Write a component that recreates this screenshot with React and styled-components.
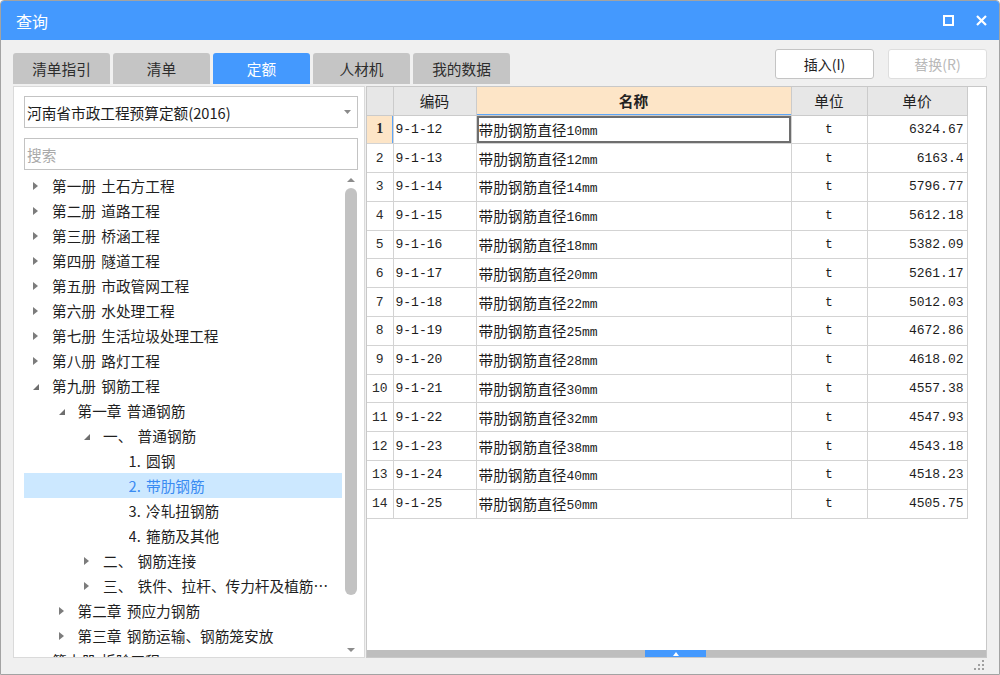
import styled, { createGlobalStyle } from "styled-components";

const CN = `"Noto Sans CJK SC", "Noto Sans", sans-serif`;
const MONO = `"Liberation Mono", "Noto Sans CJK SC", monospace`;

const GlobalStyle = createGlobalStyle`
  html, body {
    margin: 0;
    padding: 0;
    background: #fff;
  }
  body {
    font-family: ${CN};
  }
  * {
    box-sizing: border-box;
  }
`;

const Window = styled.div`
  width: 1000px;
  height: 675px;
  display: flex;
  flex-direction: column;
  background: #f0f0f0;
  border: 1px solid #a3a3a3;
  border-radius: 4px 4px 0 0;
  overflow: hidden;
  font-family: ${CN};
`;

const TitleBar = styled.div`
  height: 39px;
  flex: none;
  display: flex;
  align-items: center;
  padding: 0 7px 0 15px;
  background: #4499fe;
  color: #fff;
  font-size: 16px;
`;

const TitleText = styled.div`
  flex: 1;
`;

const TitleButton = styled.div`
  width: 22px;
  height: 22px;
  margin-left: 11px;
  display: flex;
  align-items: center;
  justify-content: center;
`;

const Body = styled.div`
  flex: 1;
  min-height: 0;
  display: flex;
  flex-direction: column;
  padding: 9px 12px 0 12px;
`;

const TopBar = styled.div`
  height: 37px;
  flex: none;
  display: flex;
  justify-content: space-between;
`;

const Tabs = styled.div`
  display: flex;
  gap: 3px;
  align-self: flex-end;
  margin-bottom: 2px;
`;

const Tab = styled.div`
  width: 97px;
  height: 31px;
  display: flex;
  align-items: center;
  justify-content: center;
  border-radius: 3px 3px 0 0;
  font-size: 14.67px;
  background: ${(p) => (p.$active ? "#4499fe" : "#c5c5c5")};
  color: ${(p) => (p.$active ? "#fff" : "#2d2d2d")};
`;

const Actions = styled.div`
  display: flex;
  gap: 14px;
`;

const ActionButton = styled.button`
  width: 99px;
  height: 30px;
  padding: 0;
  background: #fff;
  border: 1px solid ${(p) => (p.disabled ? "#dedede" : "#c4c4c4")};
  border-radius: 3px;
  font-family: ${CN};
  font-size: 14px;
  color: ${(p) => (p.disabled ? "#b8b8b8" : "#222")};
`;

const Panels = styled.div`
  height: 572px;
  flex: none;
  display: flex;
`;

const LeftPanel = styled.div`
  width: 352px;
  flex: none;
  display: flex;
  flex-direction: column;
  background: #fff;
  border: 1px solid #dadada;
  padding: 9px 6px 0 10px;
`;

const Select = styled.div`
  height: 32px;
  flex: none;
  display: flex;
  align-items: center;
  justify-content: space-between;
  padding: 0 6px 0 2px;
  border: 1px solid #c3c3c3;
  font-size: 14.67px;
  color: #1c1c1c;
`;

const SearchInput = styled.input`
  height: 32px;
  flex: none;
  margin-top: 10px;
  padding: 0 2px;
  border: 1px solid #c3c3c3;
  outline: none;
  font-family: ${CN};
  font-size: 14.67px;
  color: #1c1c1c;

  &::placeholder {
    color: #a9a9a9;
  }
`;

const TreeArea = styled.div`
  flex: 1;
  min-height: 0;
  margin-top: 3px;
  display: flex;
  overflow: hidden;
`;

const TreeList = styled.div`
  flex: 1;
  min-width: 0;
`;

const TreeRow = styled.div`
  height: 25px;
  display: flex;
  align-items: center;
  padding-left: ${(p) => 9 + p.$level * 25.5}px;
  padding-right: 8px;
  background: ${(p) => (p.$selected ? "#cce8ff" : "transparent")};
  color: ${(p) => (p.$selected ? "#3a8bf2" : "#1f1f1f")};
`;

const Toggle = styled.div`
  width: 19px;
  flex: none;
  display: flex;
  align-items: center;
`;

const TreeLabel = styled.div`
  flex: 1;
  min-width: 0;
  font-size: 14.67px;
  line-height: 25px;
  white-space: pre;
  word-spacing: 2px;
  overflow: hidden;
  text-overflow: ellipsis;
`;

const VScroll = styled.div`
  width: 14px;
  flex: none;
  margin-left: 2px;
  display: flex;
  flex-direction: column;
  align-items: center;
`;

const ScrollArrow = styled.div`
  height: 14px;
  flex: none;
  display: flex;
  align-items: center;
  justify-content: center;
`;

const VThumb = styled.div`
  width: 12px;
  height: 407px;
  flex: none;
  margin-top: 1px;
  border-radius: 6px;
  background: #c2c2c2;
`;

const Spacer = styled.div`
  flex: 1;
`;

const RightPanel = styled.div`
  flex: 1;
  margin-left: 1px;
  display: flex;
  flex-direction: column;
  background: #fff;
  border: 1px solid #c8c8c8;
`;

const TableArea = styled.div`
  flex: 1;
  min-height: 0;
  overflow: hidden;
`;

const Table = styled.table`
  width: 600px;
  border-collapse: collapse;
  table-layout: fixed;
`;

const HeadCell = styled.th`
  height: 28px;
  padding: 0;
  border: 1px solid #cbcbcb;
  border-top: none;
  background: ${(p) => (p.$current ? "#fde5c7" : "#e7e7e7")};
  box-shadow: ${(p) => (p.$current ? "inset 0 -1px 0 #5ea6f7" : "none")};
  font-family: ${CN};
  font-size: 14.67px;
  font-weight: ${(p) => (p.$current ? 700 : 400)};
  color: #222;
  text-align: center;

  &:first-child {
    border-left: none;
  }
`;

const Row = styled.tr`
  height: 28.8px;
`;

const Cell = styled.td`
  padding: 0 ${(p) => (p.$align === "right" ? "3px" : "0")} 0
    ${(p) => (p.$align === "left" ? "2px" : "0")};
  border: 1px solid #d3d3d3;
  font-family: ${MONO};
  font-size: 13px;
  color: #1c1c1c;
  text-align: ${(p) => p.$align || "center"};
  white-space: nowrap;
  overflow: hidden;
  box-shadow: ${(p) => (p.$active ? "inset 0 0 0 2px #6e6e6e" : "none")};
`;

const NumCell = styled.td`
  padding: 0;
  border: 1px solid #d3d3d3;
  border-left: none;
  background: ${(p) => (p.$current ? "#fde5c7" : "#fff")};
  box-shadow: ${(p) => (p.$current ? "inset -1px 0 0 #5ea6f7" : "none")};
  font-family: ${(p) => (p.$current ? `"Liberation Serif", serif` : MONO)};
  font-size: ${(p) => (p.$current ? "14px" : "13px")};
  font-weight: ${(p) => (p.$current ? 700 : 400)};
  color: #2a2a2a;
  text-align: center;
`;

const CnText = styled.span`
  font-family: ${CN};
  font-size: 14.67px;
`;

const SizeText = styled.span`
  position: relative;
  top: -1px;
`;

const HScroll = styled.div`
  height: 7px;
  flex: none;
  background: #bebebe;
  padding-left: 278px;
`;

const HThumb = styled.div`
  width: 61px;
  height: 7px;
  background: #4499fe;
  display: flex;
  align-items: center;
  justify-content: center;
`;

const Footer = styled.div`
  height: 15px;
  flex: none;
  display: flex;
  justify-content: flex-end;
  align-items: flex-start;
  padding: 2px 3px 0 0;
`;

const tree = [
  { level: 0, label: "第一册 土石方工程", toggle: "closed" },
  { level: 0, label: "第二册 道路工程", toggle: "closed" },
  { level: 0, label: "第三册 桥涵工程", toggle: "closed" },
  { level: 0, label: "第四册 隧道工程", toggle: "closed" },
  { level: 0, label: "第五册 市政管网工程", toggle: "closed" },
  { level: 0, label: "第六册 水处理工程", toggle: "closed" },
  { level: 0, label: "第七册 生活垃圾处理工程", toggle: "closed" },
  { level: 0, label: "第八册 路灯工程", toggle: "closed" },
  { level: 0, label: "第九册 钢筋工程", toggle: "open" },
  { level: 1, label: "第一章 普通钢筋", toggle: "open" },
  { level: 2, label: "一、 普通钢筋", toggle: "open" },
  { level: 3, label: "1. 圆钢" },
  { level: 3, label: "2. 带肋钢筋", selected: true },
  { level: 3, label: "3. 冷轧扭钢筋" },
  { level: 3, label: "4. 箍筋及其他" },
  { level: 2, label: "二、 钢筋连接", toggle: "closed" },
  { level: 2, label: "三、 铁件、拉杆、传力杆及植筋、锚栓", toggle: "closed" },
  { level: 1, label: "第二章 预应力钢筋", toggle: "closed" },
  { level: 1, label: "第三章 钢筋运输、钢筋笼安放", toggle: "closed" },
  { level: 0, label: "第十册 拆除工程", toggle: "closed" },
];

const items = [
  ["9-1-12", "10mm", "6324.67"],
  ["9-1-13", "12mm", "6163.4"],
  ["9-1-14", "14mm", "5796.77"],
  ["9-1-15", "16mm", "5612.18"],
  ["9-1-16", "18mm", "5382.09"],
  ["9-1-17", "20mm", "5261.17"],
  ["9-1-18", "22mm", "5012.03"],
  ["9-1-19", "25mm", "4672.86"],
  ["9-1-20", "28mm", "4618.02"],
  ["9-1-21", "30mm", "4557.38"],
  ["9-1-22", "32mm", "4547.93"],
  ["9-1-23", "38mm", "4543.18"],
  ["9-1-24", "40mm", "4518.23"],
  ["9-1-25", "50mm", "4505.75"],
];

function Caret({ state }) {
  if (state === "open") {
    return (
      <svg width="6" height="6" viewBox="0 0 6 6" style={{ marginTop: 3 }}>
        <path d="M6 0 L6 6 L0 6 Z" fill="#6e6e6e" />
      </svg>
    );
  }
  if (state === "closed") {
    return (
      <svg width="5" height="8" viewBox="0 0 5 8">
        <path d="M0 0 L5 4 L0 8 Z" fill="#7c7c7c" />
      </svg>
    );
  }
  return null;
}

export default function App() {
  return (
    <>
      <GlobalStyle />
      <Window>
        <TitleBar>
          <TitleText>查询</TitleText>
          <TitleButton>
            <svg width="11" height="11" viewBox="0 0 11 11">
              <rect x="1" y="1" width="9" height="9" fill="none" stroke="#fff" strokeWidth="2" />
            </svg>
          </TitleButton>
          <TitleButton>
            <svg width="11" height="11" viewBox="0 0 11 11">
              <path d="M1 1 L10 10 M10 1 L1 10" stroke="#fff" strokeWidth="2.2" />
            </svg>
          </TitleButton>
        </TitleBar>

        <Body>
          <TopBar>
            <Tabs>
              <Tab>清单指引</Tab>
              <Tab>清单</Tab>
              <Tab $active>定额</Tab>
              <Tab>人材机</Tab>
              <Tab>我的数据</Tab>
            </Tabs>
            <Actions>
              <ActionButton>插入(I)</ActionButton>
              <ActionButton disabled>替换(R)</ActionButton>
            </Actions>
          </TopBar>

          <Panels>
            <LeftPanel>
              <Select>
                <span>河南省市政工程预算定额(2016)</span>
                <svg width="7" height="4" viewBox="0 0 7 4">
                  <path d="M0 0 L7 0 L3.5 4 Z" fill="#8a8a8a" />
                </svg>
              </Select>
              <SearchInput placeholder="搜索" />
              <TreeArea>
                <TreeList>
                  {tree.map((node) => (
                    <TreeRow key={node.label} $level={node.level} $selected={node.selected}>
                      <Toggle>
                        <Caret state={node.toggle} />
                      </Toggle>
                      <TreeLabel>{node.label}</TreeLabel>
                    </TreeRow>
                  ))}
                </TreeList>
                <VScroll>
                  <ScrollArrow>
                    <svg width="8" height="4" viewBox="0 0 8 4">
                      <path d="M0 4 L8 4 L4 0 Z" fill="#8c8c8c" />
                    </svg>
                  </ScrollArrow>
                  <VThumb />
                  <Spacer />
                  <ScrollArrow>
                    <svg width="8" height="4" viewBox="0 0 8 4">
                      <path d="M0 0 L8 0 L4 4 Z" fill="#8c8c8c" />
                    </svg>
                  </ScrollArrow>
                </VScroll>
              </TreeArea>
            </LeftPanel>

            <RightPanel>
              <TableArea>
                <Table>
                  <colgroup>
                    <col style={{ width: 26 }} />
                    <col style={{ width: 83 }} />
                    <col style={{ width: 315 }} />
                    <col style={{ width: 76 }} />
                    <col style={{ width: 100 }} />
                  </colgroup>
                  <thead>
                    <tr>
                      <HeadCell />
                      <HeadCell>编码</HeadCell>
                      <HeadCell $current>名称</HeadCell>
                      <HeadCell>单位</HeadCell>
                      <HeadCell>单价</HeadCell>
                    </tr>
                  </thead>
                  <tbody>
                    {items.map(([code, size, price], i) => (
                      <Row key={code}>
                        <NumCell $current={i === 0}>{i + 1}</NumCell>
                        <Cell $align="left">{code}</Cell>
                        <Cell $align="left" $active={i === 0}>
                          <CnText>带肋钢筋直径</CnText>
                          <SizeText>{size}</SizeText>
                        </Cell>
                        <Cell>t</Cell>
                        <Cell $align="right">{price}</Cell>
                      </Row>
                    ))}
                  </tbody>
                </Table>
              </TableArea>
              <HScroll>
                <HThumb>
                  <svg width="6" height="4" viewBox="0 0 6 4">
                    <path d="M0 4 L6 4 L3 0 Z" fill="#fff" />
                  </svg>
                </HThumb>
              </HScroll>
            </RightPanel>
          </Panels>

          <Footer>
            <svg width="10" height="10" viewBox="0 0 10 10">
              <rect x="8" y="0" width="2" height="2" fill="#a0a0a0" />
              <rect x="4" y="4" width="2" height="2" fill="#a0a0a0" />
              <rect x="8" y="4" width="2" height="2" fill="#a0a0a0" />
              <rect x="0" y="8" width="2" height="2" fill="#a0a0a0" />
              <rect x="4" y="8" width="2" height="2" fill="#a0a0a0" />
              <rect x="8" y="8" width="2" height="2" fill="#a0a0a0" />
            </svg>
          </Footer>
        </Body>
      </Window>
    </>
  );
}
